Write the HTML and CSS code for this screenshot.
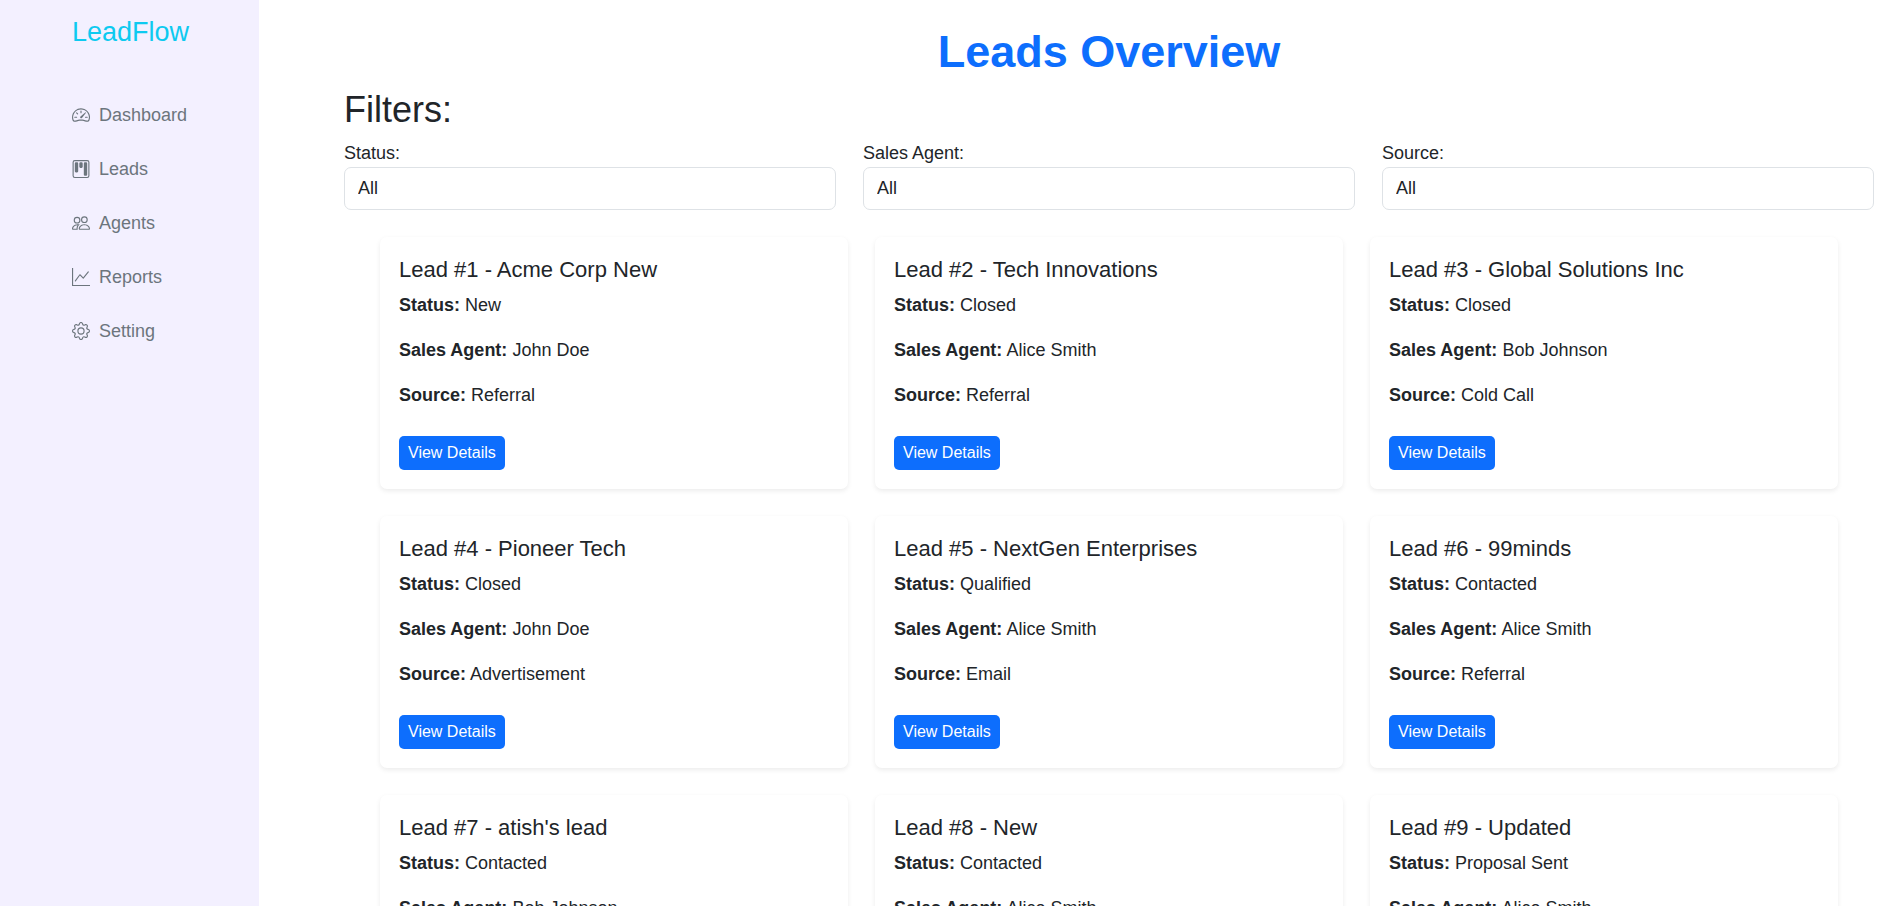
FILE: index.html
```html
<!DOCTYPE html>
<html lang="en">
<head>
<meta charset="utf-8">
<meta name="viewport" content="width=device-width, initial-scale=1">
<title>LeadFlow</title>
<link rel="stylesheet" href="styles.css">
</head>
<body>
<div class="layout">
  <aside class="sidebar">
    <a class="brand" href="#">LeadFlow</a>
    <nav class="nav">
      <a class="nav-link" href="#">
        <svg class="icon" viewBox="0 0 16 16" aria-hidden="true"><path d="M8 4a.5.5 0 0 1 .5.5V6a.5.5 0 0 1-1 0V4.500A.5.5 0 0 1 8 4zM3.732 5.732a.5.5 0 0 1 .707 0l.915.914a.5.5 0 1 1-.708.708l-.914-.915a.5.5 0 0 1 0-.707zM2 10a.5.5 0 0 1 .5-.5h1.586a.5.5 0 0 1 0 1H2.500A.5.5 0 0 1 2 10zm9.500 0a.5.5 0 0 1 .5-.5h1.500a.5.5 0 0 1 0 1H12a.5.5 0 0 1-.5-.5zm.754-4.246a.389.389 0 0 0-.527-.020L7.547 9.310a.910.910 0 1 0 1.302 1.258l3.434-4.297a.389.389 0 0 0-.029-.518z"/><path fill-rule="evenodd" d="M0 10a8 8 0 1 1 15.547 2.661c-.442 1.253-1.845 1.602-2.932 1.250C11.309 13.488 9.475 13 8 13c-1.474 0-3.310.488-4.615.911-1.087.352-2.490.003-2.932-1.250A7.988 7.988 0 0 1 0 10zm8-7a7 7 0 0 0-6.603 9.329c.203.575.923.876 1.680.630C4.397 12.533 6.358 12 8 12s3.604.532 4.923.960c.757.245 1.477-.056 1.680-.631A7 7 0 0 0 8 3z"/></svg>
        <span>Dashboard</span></a>
      <a class="nav-link" href="#">
        <svg class="icon" viewBox="0 0 16 16" aria-hidden="true"><path d="M13.500 1a1 1 0 0 1 1 1v12a1 1 0 0 1-1 1h-11a1 1 0 0 1-1-1V2a1 1 0 0 1 1-1h11zm-11-1a2 2 0 0 0-2 2v12a2 2 0 0 0 2 2h11a2 2 0 0 0 2-2V2a2 2 0 0 0-2-2h-11z"/><path d="M6.500 3a1 1 0 0 1 1-1h1a1 1 0 0 1 1 1v3a1 1 0 0 1-1 1h-1a1 1 0 0 1-1-1V3zm-4 0a1 1 0 0 1 1-1h1a1 1 0 0 1 1 1v7a1 1 0 0 1-1 1h-1a1 1 0 0 1-1-1V3zm8 0a1 1 0 0 1 1-1h1a1 1 0 0 1 1 1v10a1 1 0 0 1-1 1h-1a1 1 0 0 1-1-1V3z"/></svg>
        <span>Leads</span></a>
      <a class="nav-link" href="#">
        <svg class="icon" viewBox="0 0 16 16" aria-hidden="true"><path d="M15 14s1 0 1-1-1-4-5-4-5 3-5 4 1 1 1 1h8Zm-7.978-1A.261.261 0 0 1 7 12.996c.001-.264.167-1.030.760-1.720C8.312 10.629 9.282 10 11 10c1.717 0 2.687.630 3.240 1.276.593.690.758 1.457.760 1.720l-.008.002a.274.274 0 0 1-.014.002H7.022ZM11 7a2 2 0 1 0 0-4 2 2 0 0 0 0 4Zm3-2a3 3 0 1 1-6 0 3 3 0 0 1 6 0ZM6.936 9.280a5.880 5.880 0 0 0-1.230-.247A7.350 7.350 0 0 0 5 9c-4 0-5 3-5 4 0 .667.333 1 1 1h4.216A2.238 2.238 0 0 1 5 13c0-1.010.377-2.042 1.090-2.904.243-.294.526-.569.846-.816ZM4.920 10A5.493 5.493 0 0 0 4 13H1c0-.260.164-1.030.760-1.724.545-.636 1.492-1.256 3.160-1.275ZM1.500 5.500a3 3 0 1 1 6 0 3 3 0 0 1-6 0Zm3-2a2 2 0 1 0 0 4 2 2 0 0 0 0-4Z"/></svg>
        <span>Agents</span></a>
      <a class="nav-link" href="#">
        <svg class="icon" viewBox="0 0 16 16" aria-hidden="true"><path fill-rule="evenodd" d="M0 0h1v15h15v1H0V0Zm14.817 3.113a.5.5 0 0 1 .070.704l-4.500 5.500a.5.5 0 0 1-.740.037L7.060 6.767l-3.656 5.027a.5.5 0 0 1-.808-.588l4-5.500a.5.5 0 0 1 .758-.060l2.609 2.610 4.150-5.073a.5.5 0 0 1 .704-.070Z"/></svg>
        <span>Reports</span></a>
      <a class="nav-link" href="#">
        <svg class="icon" viewBox="0 0 16 16" aria-hidden="true"><path d="M8 4.754a3.246 3.246 0 1 0 0 6.492 3.246 3.246 0 0 0 0-6.492zM5.754 8a2.246 2.246 0 1 1 4.492 0 2.246 2.246 0 0 1-4.492 0z"/><path d="M9.796 1.343c-.527-1.790-3.065-1.790-3.592 0l-.094.319a.873.873 0 0 1-1.255.520l-.292-.160c-1.640-.892-3.433.902-2.540 2.541l.159.292a.873.873 0 0 1-.520 1.255l-.319.094c-1.790.527-1.790 3.065 0 3.592l.319.094a.873.873 0 0 1 .520 1.255l-.160.292c-.892 1.640.901 3.434 2.541 2.540l.292-.159a.873.873 0 0 1 1.255.520l.094.319c.527 1.790 3.065 1.790 3.592 0l.094-.319a.873.873 0 0 1 1.255-.520l.292.160c1.640.893 3.434-.902 2.540-2.541l-.159-.292a.873.873 0 0 1 .520-1.255l.319-.094c1.790-.527 1.790-3.065 0-3.592l-.319-.094a.873.873 0 0 1-.520-1.255l.160-.292c.893-1.640-.902-3.433-2.541-2.540l-.292.159a.873.873 0 0 1-1.255-.520l-.094-.319zm-2.633.283c.246-.835 1.428-.835 1.674 0l.094.319a1.873 1.873 0 0 0 2.693 1.115l.291-.160c.764-.415 1.600.420 1.184 1.185l-.159.292a1.873 1.873 0 0 0 1.116 2.692l.318.094c.835.246.835 1.428 0 1.674l-.319.094a1.873 1.873 0 0 0-1.115 2.693l.160.291c.415.764-.420 1.600-1.185 1.184l-.291-.159a1.873 1.873 0 0 0-2.693 1.116l-.094.318c-.246.835-1.428.835-1.674 0l-.094-.319a1.873 1.873 0 0 0-2.692-1.115l-.292.160c-.764.415-1.600-.420-1.184-1.185l.159-.291A1.873 1.873 0 0 0 1.945 8.930l-.319-.094c-.835-.246-.835-1.428 0-1.674l.319-.094A1.873 1.873 0 0 0 3.060 4.377l-.160-.292c-.415-.764.420-1.600 1.185-1.184l.292.159a1.873 1.873 0 0 0 2.692-1.115l.094-.319z"/></svg>
        <span>Setting</span></a>
    </nav>
  </aside>

  <main class="main">
    <h1 class="page-title">Leads Overview</h1>
    <h2 class="section-title">Filters:</h2>
    <form class="filters">
      <div class="field">
        <label for="status">Status:</label>
        <select id="status" class="select"><option>All</option><option>New</option><option>Contacted</option><option>Qualified</option><option>Proposal Sent</option><option>Closed</option></select>
      </div>
      <div class="field">
        <label for="agent">Sales Agent:</label>
        <select id="agent" class="select"><option>All</option><option>John Doe</option><option>Alice Smith</option><option>Bob Johnson</option></select>
      </div>
      <div class="field">
        <label for="source">Source:</label>
        <select id="source" class="select"><option>All</option><option>Referral</option><option>Cold Call</option><option>Advertisement</option><option>Email</option></select>
      </div>
    </form>

    <section class="leads">
      <article class="card">
        <h5 class="card-title">Lead #1 - Acme Corp New</h5>
        <p class="card-text"><strong>Status:</strong> New</p>
        <p class="card-text"><strong>Sales Agent:</strong> John Doe</p>
        <p class="card-text"><strong>Source:</strong> Referral</p>
        <a class="button" href="#">View Details</a>
      </article>
      <article class="card">
        <h5 class="card-title">Lead #2 - Tech Innovations</h5>
        <p class="card-text"><strong>Status:</strong> Closed</p>
        <p class="card-text"><strong>Sales Agent:</strong> Alice Smith</p>
        <p class="card-text"><strong>Source:</strong> Referral</p>
        <a class="button" href="#">View Details</a>
      </article>
      <article class="card">
        <h5 class="card-title">Lead #3 - Global Solutions Inc</h5>
        <p class="card-text"><strong>Status:</strong> Closed</p>
        <p class="card-text"><strong>Sales Agent:</strong> Bob Johnson</p>
        <p class="card-text"><strong>Source:</strong> Cold Call</p>
        <a class="button" href="#">View Details</a>
      </article>
      <article class="card">
        <h5 class="card-title">Lead #4 - Pioneer Tech</h5>
        <p class="card-text"><strong>Status:</strong> Closed</p>
        <p class="card-text"><strong>Sales Agent:</strong> John Doe</p>
        <p class="card-text"><strong>Source:</strong> Advertisement</p>
        <a class="button" href="#">View Details</a>
      </article>
      <article class="card">
        <h5 class="card-title">Lead #5 - NextGen Enterprises</h5>
        <p class="card-text"><strong>Status:</strong> Qualified</p>
        <p class="card-text"><strong>Sales Agent:</strong> Alice Smith</p>
        <p class="card-text"><strong>Source:</strong> Email</p>
        <a class="button" href="#">View Details</a>
      </article>
      <article class="card">
        <h5 class="card-title">Lead #6 - 99minds</h5>
        <p class="card-text"><strong>Status:</strong> Contacted</p>
        <p class="card-text"><strong>Sales Agent:</strong> Alice Smith</p>
        <p class="card-text"><strong>Source:</strong> Referral</p>
        <a class="button" href="#">View Details</a>
      </article>
      <article class="card">
        <h5 class="card-title">Lead #7 - atish's lead</h5>
        <p class="card-text"><strong>Status:</strong> Contacted</p>
        <p class="card-text"><strong>Sales Agent:</strong> Bob Johnson</p>
      </article>
      <article class="card">
        <h5 class="card-title">Lead #8 - New</h5>
        <p class="card-text"><strong>Status:</strong> Contacted</p>
        <p class="card-text"><strong>Sales Agent:</strong> Alice Smith</p>
      </article>
      <article class="card">
        <h5 class="card-title">Lead #9 - Updated</h5>
        <p class="card-text"><strong>Status:</strong> Proposal Sent</p>
        <p class="card-text"><strong>Sales Agent:</strong> Alice Smith</p>
      </article>
    </section>
  </main>
</div>
</body>
</html>
```
FILE: styles.css
```css
*, *::before, *::after { box-sizing: border-box; }

body {
  margin: 0;
  background: #fff;
  color: #212529;
  font-family: "Liberation Sans", Arial, sans-serif;
  font-size: 18px;
  line-height: 27px;
}

h1, h2, h5, p { margin: 0; }

.layout {
  display: flex;
  height: 100vh;
}

.sidebar {
  flex: 0 0 259px;
  padding: 12px 0 0 72px;
  background: #f3f0ff;
}

.brand {
  display: block;
  color: #0dcaf0;
  font-size: 27px;
  line-height: 40px;
  text-decoration: none;
}

.nav {
  display: flex;
  flex-direction: column;
  margin-top: 36px;
}

.nav-link {
  display: flex;
  align-items: center;
  gap: 9px;
  height: 54px;
  color: #6c757d;
  text-decoration: none;
}

.icon {
  width: 18px;
  height: 18px;
  fill: currentColor;
}

.main {
  flex: 1;
  min-width: 0;
  padding: 25px 12px 0 85px;
  overflow-y: auto;
  scrollbar-width: none;
}

.page-title {
  margin-bottom: 9px;
  color: #0d6efd;
  font-size: 45px;
  font-weight: 700;
  line-height: 54px;
  text-align: center;
}

.section-title {
  margin-bottom: 9px;
  font-size: 36px;
  font-weight: 400;
  line-height: 43px;
}

.filters {
  display: grid;
  grid-template-columns: repeat(3, 1fr);
  gap: 27px;
}

.field {
  display: flex;
  flex-direction: column;
}

.select {
  appearance: none;
  width: 100%;
  padding: 7px 13px;
  border: 1px solid #dee2e6;
  border-radius: 7px;
  background: #fff;
  color: inherit;
  font: inherit;
}

.leads {
  display: grid;
  grid-template-columns: repeat(3, 1fr);
  gap: 27px;
  padding: 27px 36px;
}

.card {
  padding: 19px;
  border-radius: 7px;
  background: #fff;
  box-shadow: 0 2px 5px rgba(0, 0, 0, 0.08);
}

.card-title {
  margin-bottom: 9px;
  font-size: 22px;
  font-weight: 400;
  line-height: 27px;
}

.card-text { margin-bottom: 18px; }

.button {
  display: inline-block;
  margin-top: 9px;
  padding: 5px 9px;
  border-radius: 5px;
  background: #0d6efd;
  color: #fff;
  font-size: 16px;
  line-height: 24px;
  text-decoration: none;
}
```
